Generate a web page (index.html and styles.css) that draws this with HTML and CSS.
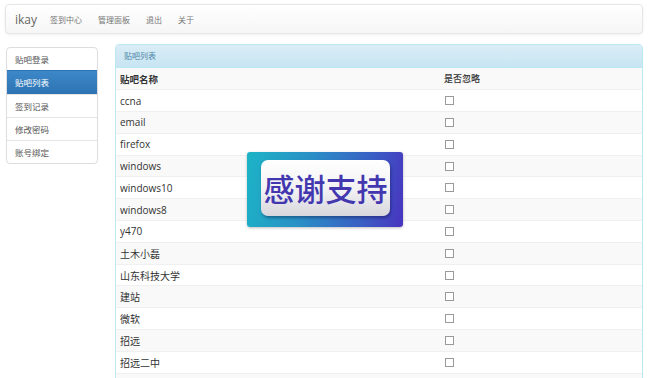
FILE: index.html
```html
<!DOCTYPE html>
<html lang="zh-CN">
<head>
<meta charset="utf-8">
<title>ikay</title>
<link rel="stylesheet" href="styles.css">
</head>
<body>
<nav class="navbar">
  <a class="brand">ikay</a>
  <a class="nav-link">签到中心</a>
  <a class="nav-link">管理面板</a>
  <a class="nav-link">退出</a>
  <a class="nav-link">关于</a>
</nav>
<div class="main">
  <ul class="side">
    <li class="side-item">贴吧登录</li>
    <li class="side-item active">贴吧列表</li>
    <li class="side-item">签到记录</li>
    <li class="side-item">修改密码</li>
    <li class="side-item">账号绑定</li>
  </ul>
  <section class="panel">
    <div class="panel-heading">贴吧列表</div>
    <table class="list">
      <tbody>
        <tr class="head"><td class="c1">贴吧名称</td><td>是否忽略</td></tr>
        <tr><td class="c1">ccna</td><td><input type="checkbox" class="chk"></td></tr>
        <tr><td class="c1">email</td><td><input type="checkbox" class="chk"></td></tr>
        <tr><td class="c1">firefox</td><td><input type="checkbox" class="chk"></td></tr>
        <tr><td class="c1">windows</td><td><input type="checkbox" class="chk"></td></tr>
        <tr><td class="c1">windows10</td><td><input type="checkbox" class="chk"></td></tr>
        <tr><td class="c1">windows8</td><td><input type="checkbox" class="chk"></td></tr>
        <tr><td class="c1">y470</td><td><input type="checkbox" class="chk"></td></tr>
        <tr><td class="c1">土木小磊</td><td><input type="checkbox" class="chk"></td></tr>
        <tr><td class="c1">山东科技大学</td><td><input type="checkbox" class="chk"></td></tr>
        <tr><td class="c1">建站</td><td><input type="checkbox" class="chk"></td></tr>
        <tr><td class="c1">微软</td><td><input type="checkbox" class="chk"></td></tr>
        <tr><td class="c1">招远</td><td><input type="checkbox" class="chk"></td></tr>
        <tr><td class="c1">招远二中</td><td><input type="checkbox" class="chk"></td></tr>
        <tr><td class="c1">&nbsp;</td><td></td></tr>
      </tbody>
    </table>
  </section>
</div>
<div class="thanks">
  <div class="thanks-btn">感谢支持</div>
</div>
</body>
</html>
```

FILE: styles.css
```css
html, body {
  margin: 0;
  padding: 0;
  background: #fff;
  overflow: hidden;
}
body {
  font-family: "Open Sans", "Noto Sans CJK SC", sans-serif;
  color: #333;
  width: 650px;
  height: 378px;
  position: relative;
}
.navbar {
  margin: 4px 7px 0 5px;
  height: 28px;
  border: 1px solid #e6e6e6;
  border-radius: 4px;
  background: linear-gradient(#ffffff, #f6f6f6);
  box-shadow: 0 1px 3px rgba(0,0,0,0.06);
  display: flex;
  align-items: center;
  padding-left: 9px;
}
.brand {
  font-size: 12px;
  color: #666;
  margin-right: 13px;
}
.nav-link {
  font-size: 8px;
  color: #777;
  margin-right: 16px;
  font-family: "Noto Sans CJK SC", sans-serif;
}
.main {
  display: flex;
  align-items: flex-start;
  margin-top: 10px;
  padding-left: 6px;
}
.side {
  list-style: none;
  margin: 3px 0 0 0;
  padding: 0;
  width: 90px;
  border: 1px solid #ddd;
  border-radius: 4px;
  overflow: hidden;
  font-family: "Noto Sans CJK SC", sans-serif;
  font-size: 8.5px;
  color: #555;
}
.side-item {
  height: 22px;
  line-height: 22px;
  padding-left: 8px;
  border-top: 1px solid #e5e5e5;
}
.side-item:first-child { border-top: none; }
.side-item.active {
  background: linear-gradient(#3d88c9, #2d73b3);
  color: #fff;
  border-top-color: #2e73b0;
  height: 23px;
}
.panel {
  margin-left: 17px;
  width: 526px;
  border: 1px solid #bce8f1;
  border-radius: 4px 4px 0 0;
  overflow: hidden;
}
.panel-heading {
  height: 22px;
  line-height: 22px;
  background: linear-gradient(#d9edf7, #c8e5f2);
  color: #4d86a6;
  font-family: "Noto Sans CJK SC", sans-serif;
  font-size: 8px;
  padding-left: 8px;
  border-bottom: 1px solid #bce8f1;
}
.list {
  width: 100%;
  border-collapse: collapse;
  font-size: 10px;
}
.list td {
  height: 21.8px;
  padding: 0 0 0 4px;
  vertical-align: middle;
  border-top: 1px solid #f0f0f0;
  box-sizing: border-box;
}
.list tr:first-child td { border-top: none; }
.list tr:nth-child(odd) { background: #f9f9f9; }
.list .c1 { width: 324px; }
.list .head td {
  font-family: "Noto Sans CJK SC", sans-serif;
  font-size: 9.5px;
  font-weight: bold;
  color: #333;
}
.list .head td:last-child {
  font-size: 9px;
  font-weight: 500;
  color: #333;
}
.chk {
  appearance: none;
  -webkit-appearance: none;
  width: 9px;
  height: 9px;
  margin: 0 0 0 1px;
  border: 1px solid #9a9a9a;
  background: #fff;
  display: block;
  box-sizing: border-box;
}
.thanks {
  position: absolute;
  left: 247px;
  top: 152px;
  width: 156px;
  height: 75px;
  border-radius: 3px;
  background: linear-gradient(100deg, #1cb4c6 0%, #2a8dc6 40%, #3a5ec4 75%, #4834c0 100%);
  box-shadow: 0 1px 3px rgba(0,0,0,0.25);
}
.thanks-btn {
  position: absolute;
  left: 14px;
  top: 8px;
  width: 129px;
  height: 56px;
  border-radius: 7px;
  background: linear-gradient(#ffffff 0%, #f1f1f3 55%, #d6d6dc 100%);
  box-shadow: 1px 2px 3px rgba(0,0,40,0.35);
  color: #4337b0;
  font-family: "Noto Sans CJK SC", sans-serif;
  font-size: 31px;
  font-weight: 500;
  line-height: 56px;
  text-align: center;
}
```
